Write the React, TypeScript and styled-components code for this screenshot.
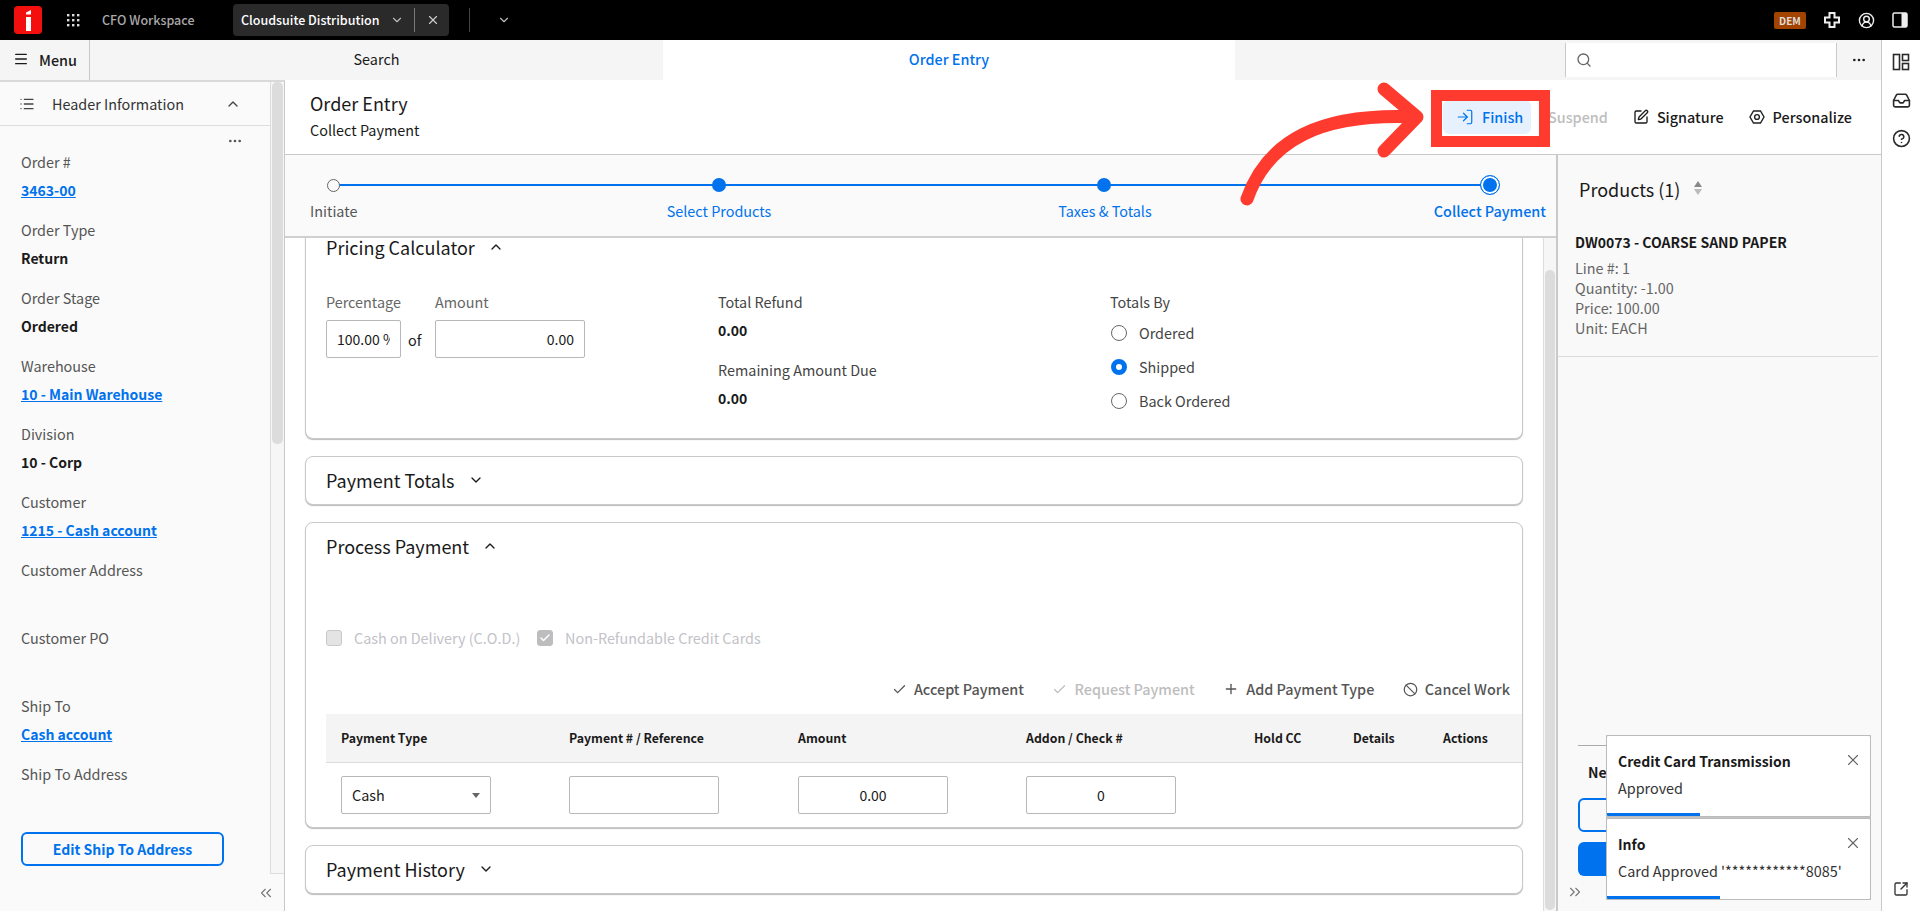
import React from "react";
import styled, { createGlobalStyle } from "styled-components";
import {
  Ban, Check, ChevronDown, ChevronUp, ChevronsLeft, ChevronsRight, CircleHelp, CircleUserRound,
  Ellipsis, Inbox, List, LogIn, Menu as MenuIcon, Plus, Search, SquareArrowOutUpRight, SquarePen, X,
} from "lucide-react";

const FONT = `"Noto Sans CJK SC", "Noto Sans", sans-serif`;
const BLUE = "#0072ed";

const Global = createGlobalStyle`
  html, body { margin: 0; padding: 0; height: 100%; overflow: hidden; }
  body { font-family: ${FONT}; font-size: 14.4px; color: #1a1a1a; background: #fff; }
  * { box-sizing: border-box; }
`;

const Page = styled.div`position: relative; width: 1920px; height: 911px; overflow: hidden; display: flex; flex-direction: column;`;

/* top bar */
const TopBar = styled.header`height: 40px; background: #000; display: flex; align-items: center; color: #fff; flex: none;`;
const Logo = styled.svg`width: 28px; height: 28px; margin-left: 14px; flex: none;`;
const WaffleWrap = styled.svg`width: 14px; height: 14px; margin-left: 24px; flex: none;`;
const Workspace = styled.span`margin-left: 22px; width: 131px; font-size: 12.5px; line-height: 20px; font-weight: 500; color: #a9a9a9;`;
const AppTab = styled.div`width: 216px; height: 32px; background: #2a2a2b; border-radius: 4px; display: flex; align-items: center; padding-left: 8px; color: #fff;`;
const AppTabName = styled.span`font-size: 12.5px; line-height: 20px; font-weight: 500; width: 149px; white-space: nowrap;`;
const AppTabSep = styled.span`width: 1px; height: 24px; background: #77777a; margin: 0 11px 0 10px;`;
const BarSep = styled.span`width: 1px; height: 24px; background: #444; margin-left: 20px;`;
const BarChevron = styled.span`display: flex; margin-left: 27px; color: #bbb;`;
const BarRight = styled.div`margin-left: auto; display: flex; align-items: center; padding-right: 10px;`;
const Dem = styled.span`width: 32px; height: 17px; background: #a24300; color: #ddd; border-radius: 2px; font-size: 10px; line-height: 17px; font-weight: 700; text-align: center; margin-right: 16px;`;
const BarIcon = styled.span`display: flex; width: 20px; justify-content: center; margin-right: 14px; &:last-child { margin-right: 0; }`;

/* body shell */
const Shell = styled.div`flex: 1; display: flex; min-height: 0;`;
const Work = styled.div`flex: 1; display: flex; flex-direction: column; min-width: 0;`;
const Rail = styled.aside`width: 39px; border-left: 1px solid #c9c9cc; padding-top: 12px; display: flex; flex-direction: column; align-items: center; background: #fff; position: relative;`;
const RailBtn = styled.span`display: flex; height: 20px; margin-bottom: 18.5px; color: #2a2a2a;`;
const RailBottom = styled.span`position: absolute; bottom: 14px; left: 11px; display: flex; color: #333;`;

/* nav row */
const NavRow = styled.nav`height: 40px; flex: none; display: flex; background: #f5f5f5;`;
const MenuBtn = styled.div`width: 90px; display: flex; align-items: center; padding: 0 0 2px 13px; gap: 10px; font-size: 14.4px; font-weight: 500; border-right: 1px solid #c9c9cc;`;
const NavTab = styled.div<{ $active?: boolean }>`width: ${p => p.$active ? 572 : 573}px; padding-bottom: 2px; display: flex; align-items: center; justify-content: center; font-size: 14.4px; line-height: 20px; ${p => p.$active ? `background:#fff;color:${BLUE};font-weight:500;` : ""}`;
const NavSpacer = styled.div`width: 330px;`;
const NavSearch = styled.div`width: 272px; margin: 3px 0; background: #fff; border-left: 1px solid #c9c9cc; border-right: 1px solid #c9c9cc; display: flex; align-items: center; padding-left: 10px; color: #666;`;
const NavMore = styled.div`flex: 1; display: flex; align-items: center; justify-content: center; color: #222;`;

/* main area */
const Body = styled.div`flex: 1; display: flex; min-height: 0;`;
const Sidebar = styled.aside`width: 285px; flex: none; background: #fafafa; border-right: 1px solid #c9c9cc; border-top: 2px solid #d9d9d9; display: flex; flex-direction: column; position: relative;`;
const SideScroll = styled.div`height: 792px; display: flex; flex: none;`;
const SideContent = styled.div`width: 270px; overflow: hidden;`;
const SideHead = styled.div`height: 44px; display: flex; align-items: center; padding-left: 19px; border-bottom: 1px solid #dcdcdc; color: #444;`;
const SideTitle = styled.span`margin-left: 17px; width: 173px; font-size: 14.4px; line-height: 20px; color: #333;`;
const SideMore = styled.div`height: 26px; padding: 7px 0 0 227px; color: #555; display: flex;`;
const FieldList = styled.dl`margin: 0; padding: 0 21px;`;
const FieldLabel = styled.dt`font-size: 14.4px; line-height: 20px; color: #555; height: 20px; white-space: nowrap;`;
const FieldValue = styled.dd<{ $link?: boolean }>`margin: 8px 0 0; height: 40px; font-size: 14px; line-height: 20px; font-weight: 600; white-space: nowrap; color: ${p => p.$link ? BLUE : "#1a1a1a"}; text-decoration: ${p => p.$link ? "underline" : "none"};`;
const EditBtn = styled.button`display: block; width: 203px; height: 34px; background: transparent; border: 2px solid ${BLUE}; border-radius: 6px; color: ${BLUE}; font: 600 14px/20px ${FONT}; padding: 0;`;
const Track = styled.div`width: 14px; flex: none; border-left: 1px solid #dcdcdc; border-bottom: 1px solid #dcdcdc; padding: 0 1px; background: #f6f6f6;`;
const Thumb = styled.div<{ $h: number; $top?: number }>`height: ${p => p.$h}px; margin-top: ${p => p.$top ?? 0}px; background: #dcdcdc; border-radius: 5px;`;
const SideFoot = styled.div`flex: 1; display: flex; justify-content: flex-end; align-items: center; padding-right: 9px; color: #777;`;

const Main = styled.main`flex: 1; display: flex; flex-direction: column; min-width: 0;`;
const PageHead = styled.div`height: 75px; flex: none; border-bottom: 1px solid #c9c9cc; background: #fff; display: flex; padding: 10px 29px 0 25px; position: relative;`;
const Titles = styled.div`flex: 1;`;
const H1 = styled.div`font-size: 18px; line-height: 26px; color: #1a1a1a;`;
const H2 = styled.div`font-size: 14.4px; line-height: 20px; margin-top: 4px; color: #1a1a1a;`;
const Actions = styled.div`display: flex; align-items: center; height: 34px; margin-top: 10px;`;
const ActBtn = styled.div<{ $kind?: "primary" | "off" }>`display: flex; align-items: center; gap: 8px; height: 34px; font-size: 14.4px; line-height: 20px; font-weight: 500; border-radius: 6px; white-space: nowrap; color: #1a1a1a;
  ${p => p.$kind === "primary" ? `background:#e6f1fd;color:${BLUE};padding:0 0 0 13px;width:88px;margin-right:17px;` : ""}
  ${p => p.$kind === "off" ? `color:#bdbdbd;margin-right:25px;` : ""}`;
const Sig = styled(ActBtn)`margin-right: 25px;`;

const Split = styled.div`flex: 1; display: flex; min-height: 0;`;
const Center = styled.div`width: 1273px; flex: none; display: flex; flex-direction: column; border-right: 2px solid #c9c9cc;`;
const Stepper = styled.div`height: 83px; flex: none; background: #fafafa; border-bottom: 2px solid #d0d0d0; position: relative;`;
const StepLine = styled.div`position: absolute; left: 48px; right: 67px; top: 29px; height: 2px; background: ${BLUE};`;
const Dots = styled.div`position: absolute; left: 38px; width: 1177px; top: 20px; height: 20px; display: grid; grid-template-columns: repeat(4, 20px); justify-content: space-between; justify-items: center; align-items: center;`;
const Dot = styled.span<{ $kind: "open" | "done" | "now" }>`width: ${p => p.$kind === "now" ? 20 : p.$kind === "done" ? 14 : 13}px; height: ${p => p.$kind === "now" ? 20 : p.$kind === "done" ? 14 : 13}px; border-radius: 50%;
  ${p => p.$kind === "open" ? "background:#fafafa;border:1px solid #666;" : ""}
  ${p => p.$kind === "done" ? `background:${BLUE};` : ""}
  ${p => p.$kind === "now" ? `background:${BLUE};border:1px solid ${BLUE};box-shadow:inset 0 0 0 2px #fff;` : ""}`;
const StepLabels = styled.div`position: absolute; left: 25px; right: 10px; top: 46px; display: grid; grid-template-columns: 190px 438px 334px 1fr; font-size: 14.4px; line-height: 20px;`;
const StepLabel = styled.span<{ $done?: boolean; $at: "l" | "c" | "r" }>`color: ${p => p.$done ? BLUE : "#555"}; text-align: ${p => p.$at === "l" ? "left" : p.$at === "c" ? "center" : "right"}; font-weight: ${p => p.$at === "r" ? 500 : 400}; white-space: nowrap;`;

const ScrollArea = styled.div`flex: 1; display: flex; min-height: 0; overflow: hidden; background: #fff;`;
const Cards = styled.div`flex: 1; padding: 0 20px; min-width: 0; overflow: hidden; display: flex; flex-direction: column;`;
const CardStack = styled.div`display: flex; flex-direction: column; gap: 17px; margin-top: -20px;`;
const MainTrack = styled(Track)`width: 13px; border-bottom: 0; background: #f6f6f6;`;
const Card = styled.section<{ $h: number }>`height: ${p => p.$h}px; flex: none; background: #fff; border: 1px solid #c9c9cc; box-shadow: 0 1px 1px #bbb; border-radius: 8px; padding: 0 20px; position: relative;`;
const CardHead = styled.div<{ $top: number }>`display: flex; align-items: center; gap: 13px; font-size: 18px; line-height: 20px; color: #1a1a1a; padding-top: ${p => p.$top}px;`;
const Head = styled.span`display: inline-block;`;

const Calc = styled.div`display: flex; margin-top: 35px;`;
const CalcLeft = styled.div`width: 392px; display: grid; grid-template-columns: 75px 34px 150px; grid-template-rows: 20px 38px; row-gap: 8px; align-items: center;`;
const Muted = styled.span`font-size: 14.4px; line-height: 20px; color: #666;`;
const Of = styled.span`text-align: left; padding-left: 7px; font-size: 14.4px;`;
const Box = styled.div<{ $w?: number; $align?: string }>`height: 38px; width: ${p => p.$w ? p.$w + "px" : "100%"}; background: #fff; border: 1px solid #b8b8bc; border-radius: 2px; font-size: 14px; line-height: 36px; padding: 0 10px; text-align: ${p => p.$align ?? "left"}; white-space: nowrap; position: relative;`;
const Clip = styled.span`display: block; overflow: hidden;`;
const CalcMid = styled.div`width: 392px;`;
const MidLabel = styled.div`font-size: 14.4px; line-height: 20px; color: #444;`;
const MidVal = styled.div`font-size: 14px; line-height: 20px; font-weight: 600; margin: 8px 0 20px;`;
const Radios = styled.div`display: flex; flex-direction: column; margin-top: 11px; gap: 14px;`;
const RadioRow = styled.div`display: flex; align-items: center; gap: 12px; padding-left: 1px; font-size: 14.4px; line-height: 20px; color: #444;`;
const Radio = styled.span<{ $on?: boolean }>`width: 16px; height: 16px; border-radius: 50%; border: ${p => p.$on ? `5px solid ${BLUE}` : "1px solid #666"}; background: #fff;`;

const Checks = styled.div`display: flex; margin-top: 70px; height: 24px; align-items: center;`;
const CheckItem = styled.div<{ $w: number }>`width: ${p => p.$w}px; display: flex; align-items: center; gap: 12px; color: #c2c2c8; font-size: 14.4px; line-height: 20px;`;
const CheckBox = styled.span<{ $on?: boolean }>`width: 16px; height: 16px; background: ${p => p.$on ? "#bdbdc0" : "#e4e4e4"}; border: 1px solid ${p => p.$on ? "#bdbdc0" : "#c8c8c8"}; border-radius: 3px; display: flex; align-items: center; justify-content: center; color: #fff;`;
const Toolbar = styled.div`display: flex; justify-content: flex-end; gap: 28.5px; margin: 27px -8px 0 0; height: 24px; align-items: center;`;
const Tool = styled.span<{ $off?: boolean }>`display: flex; align-items: center; gap: 7px; font-size: 14.4px; line-height: 20px; font-weight: 500; white-space: nowrap; color: ${p => p.$off ? "#bdbdbd" : "#555"};`;
const Table = styled.div`margin: 13px -20px 0 0;`;
const Row = styled.div<{ $head?: boolean }>`display: grid; grid-template-columns: 228px 229px 228px 228px 99px 90px 1fr; padding-left: 15px; align-items: center; ${p => p.$head ? "height:49px;background:#f4f4f4;border-bottom:1px solid #dcdcdc;font-size:12.3px;line-height:20px;font-weight:600;color:#1a1a1a;" : "height:64px;"}`;
const Select = styled(Box)`display: flex; align-items: center; justify-content: space-between; line-height: 20px; font-size: 14.4px;`;
const Caret = styled.span`width: 0; height: 0; border-left: 4px solid transparent; border-right: 4px solid transparent; border-top: 5px solid #666;`;

/* products */
const Products = styled.aside`flex: 1; background: #f9f9f9; position: relative; display: flex; flex-direction: column; overflow: hidden;`;
const ProdHead = styled.div`height: 76px; padding: 21px 0 0 21px; display: flex; align-items: flex-start; gap: 14px;`;
const ProdTitle = styled.span`font-size: 18px; line-height: 26px; color: #1a1a1a;`;
const Sort = styled.span`display: flex; flex-direction: column; gap: 2px; margin-top: 5px;`;
const SortUp = styled.i`width: 0; height: 0; border-left: 4px solid transparent; border-right: 4px solid transparent; border-bottom: 6px solid #888;`;
const SortDown = styled.i`width: 0; height: 0; border-left: 4px solid transparent; border-right: 4px solid transparent; border-top: 6px solid #bbb;`;
const ProdItem = styled.div`height: 126px; margin-right: 3px; padding: 0 0 0 17px; border-bottom: 1px solid #dcdcdc; font-size: 14.4px; line-height: 20px; color: #666;`;
const ProdName = styled.div`font-size: 14px; font-weight: 600; color: #1a1a1a; margin-bottom: 5px; line-height: 22px;`;
const ProdBottom = styled.div`flex: 1; display: flex; flex-direction: column; padding: 0 20px 0 20px; justify-content: flex-end;`;
const Rule = styled.div`height: 1px; background: #aaa; margin-bottom: 16px;`;
const NewLabel = styled.div`font-size: 14px; line-height: 20px; font-weight: 600; margin: 0 0 16px 10px; color: #1a1a1a;`;
const OutlineBtn = styled.div`height: 34px; border: 2px solid ${BLUE}; border-radius: 6px; margin-bottom: 10px;`;
const SolidBtn = styled.div`height: 34px; background: ${BLUE}; border-radius: 6px; margin-bottom: 7px;`;
const Expand = styled.div`height: 18px; margin: 0 0 10px -12px; display: flex; align-items: center; color: #777;`;

/* overlays */
const Toasts = styled.div`position: absolute; left: 1606px; top: 735px; width: 265px; display: flex; flex-direction: column; gap: 1px; background: #c4c4c4;`;
const Toast = styled.div`height: 82px; background: #fff; border: 1px solid #bbb; border-radius: 2px; padding: 14px 0 0 11px; position: relative; overflow: hidden;`;
const ToastTitle = styled.div`font-size: 14px; line-height: 22px; font-weight: 600; color: #1a1a1a;`;
const ToastMsg = styled.div`font-size: 14.4px; line-height: 20px; margin-top: 6px; color: #333;`;
const ToastClose = styled.span`position: absolute; right: 8px; top: 15px; display: flex; color: #666;`;
const ToastBar = styled.div<{ $w: number }>`position: absolute; left: 0; bottom: 0; height: 3px; width: ${p => p.$w}px; background: ${BLUE};`;
const RedBox = styled.div`position: absolute; left: 1431px; top: 90px; width: 119px; height: 57px; border: 11px solid #ff3b2f;`;
const Arrow = styled.svg`position: absolute; left: 1230px; top: 70px; width: 210px; height: 150px; pointer-events: none;`;

const fields: [string, string, boolean?][] = [
  ["Order #", "3463-00", true], ["Order Type", "Return"], ["Order Stage", "Ordered"],
  ["Warehouse", "10 - Main Warehouse", true], ["Division", "10 - Corp"], ["Customer", "1215 - Cash account", true],
  ["Customer Address", ""], ["Customer PO", ""], ["Ship To", "Cash account", true], ["Ship To Address", ""],
];

const Waffle = () => (
  <WaffleWrap viewBox="0 0 14 14" fill="#ddd">
    {[1, 6, 11].flatMap(y => [1, 6, 11].map(x => <rect key={`${x}${y}`} x={x} y={y} width="2.4" height="2.4" />))}
  </WaffleWrap>
);

export default function App() {
  return (
    <Page>
      <Global />
      <TopBar>
        <Logo viewBox="0 0 28 28">
          <rect width="28" height="28" rx="4" fill="#f40f0f" />
          <path d="M12 6.5 L17 4 V8.6 H12z M12 11 H17 V25 H12z" fill="#fff" />
        </Logo>
        <Waffle />
        <Workspace>CFO Workspace</Workspace>
        <AppTab>
          <AppTabName>Cloudsuite Distribution</AppTabName>
          <ChevronDown size={14} color="#bbb" />
          <AppTabSep />
          <X size={14} color="#ccc" />
        </AppTab>
        <BarSep />
        <BarChevron><ChevronDown size={14} /></BarChevron>
        <BarRight>
          <Dem>DEM</Dem>
          <BarIcon>
            <svg width="16" height="16" viewBox="0 0 16 16" fill="none" stroke="#eee" strokeWidth="2"><path d="M5.5 1h5v4.5H15v5h-4.5V15h-5v-4.5H1v-5h4.5z" /></svg>
          </BarIcon>
          <BarIcon><CircleUserRound size={17} color="#eee" /></BarIcon>
          <BarIcon>
            <svg width="16" height="16" viewBox="0 0 16 16"><rect x="1" y="1" width="14" height="14" rx="1.5" fill="#000" stroke="#eee" strokeWidth="1.5" /><rect x="9.5" y="1" width="5.5" height="14" fill="#eee" /></svg>
          </BarIcon>
        </BarRight>
      </TopBar>
      <Shell>
        <Work>
          <NavRow>
            <MenuBtn><MenuIcon size={16} />Menu</MenuBtn>
            <NavTab>Search</NavTab>
            <NavTab $active>Order Entry</NavTab>
            <NavSpacer />
            <NavSearch><Search size={16} /></NavSearch>
            <NavMore><Ellipsis size={16} /></NavMore>
          </NavRow>
          <Body>
            <Sidebar>
              <SideScroll>
                <SideContent>
                  <SideHead>
                    <List size={16} />
                    <SideTitle>Header Information</SideTitle>
                    <ChevronUp size={16} />
                  </SideHead>
                  <SideMore><Ellipsis size={16} /></SideMore>
                  <FieldList>
                    {fields.map(([l, v, link]) => (
                      <React.Fragment key={l}>
                        <FieldLabel>{l}</FieldLabel>
                        <FieldValue $link={link}>{v}</FieldValue>
                      </React.Fragment>
                    ))}
                  </FieldList>
                  <FieldList><EditBtn>Edit Ship To Address</EditBtn></FieldList>
                </SideContent>
                <Track><Thumb $h={362} /></Track>
              </SideScroll>
              <SideFoot><ChevronsLeft size={18} strokeWidth={1.5} /></SideFoot>
            </Sidebar>
            <Main>
              <PageHead>
                <Titles>
                  <H1>Order Entry</H1>
                  <H2>Collect Payment</H2>
                </Titles>
                <Actions>
                  <ActBtn $kind="primary"><LogIn size={18} strokeWidth={1.6} />Finish</ActBtn>
                  <ActBtn $kind="off">Suspend</ActBtn>
                  <Sig><SquarePen size={16} />Signature</Sig>
                  <ActBtn>
                    <svg width="16" height="16" viewBox="0 0 16 16" fill="none" stroke="#222" strokeWidth="1.4"><path d="M4.5 2h7L15 8l-3.5 6h-7L1 8z" /><circle cx="8" cy="8" r="2.4" /></svg>
                    Personalize
                  </ActBtn>
                </Actions>
              </PageHead>
              <Split>
                <Center>
                  <Stepper>
                    <StepLine />
                    <Dots>
                      <Dot $kind="open" /><Dot $kind="done" /><Dot $kind="done" /><Dot $kind="now" />
                    </Dots>
                    <StepLabels>
                      <StepLabel $at="l">Initiate</StepLabel>
                      <StepLabel $at="c" $done>Select Products</StepLabel>
                      <StepLabel $at="c" $done>Taxes &amp; Totals</StepLabel>
                      <StepLabel $at="r" $done>Collect Payment</StepLabel>
                    </StepLabels>
                  </Stepper>
                  <ScrollArea>
                    <Cards>
                      <CardStack>
                        <Card $h={221}>
                          <CardHead $top={18}><Head>Pricing Calculator</Head><ChevronUp size={16} /></CardHead>
                          <Calc>
                            <CalcLeft>
                              <Muted>Percentage</Muted><span /><Muted>Amount</Muted>
                              <Box><Clip>100.00 %</Clip></Box><Of>of</Of><Box $align="right">0.00</Box>
                            </CalcLeft>
                            <CalcMid>
                              <MidLabel>Total Refund</MidLabel>
                              <MidVal>0.00</MidVal>
                              <MidLabel>Remaining Amount Due</MidLabel>
                              <MidVal>0.00</MidVal>
                            </CalcMid>
                            <div>
                              <MidLabel>Totals By</MidLabel>
                              <Radios>
                                <RadioRow><Radio />Ordered</RadioRow>
                                <RadioRow><Radio $on />Shipped</RadioRow>
                                <RadioRow><Radio />Back Ordered</RadioRow>
                              </Radios>
                            </div>
                          </Calc>
                        </Card>
                        <Card $h={49}>
                          <CardHead $top={13}><Head>Payment Totals</Head><ChevronDown size={16} /></CardHead>
                        </Card>
                        <Card $h={306}>
                          <CardHead $top={13}><Head>Process Payment</Head><ChevronUp size={16} /></CardHead>
                          <Checks>
                            <CheckItem $w={211}><CheckBox />Cash on Delivery (C.O.D.)</CheckItem>
                            <CheckItem $w={300}><CheckBox $on><Check size={12} strokeWidth={3} /></CheckBox>Non-Refundable Credit Cards</CheckItem>
                          </Checks>
                          <Toolbar>
                            <Tool><Check size={15} />Accept Payment</Tool>
                            <Tool $off><Check size={15} />Request Payment</Tool>
                            <Tool><Plus size={16} />Add Payment Type</Tool>
                            <Tool><Ban size={15} />Cancel Work</Tool>
                          </Toolbar>
                          <Table>
                            <Row $head>
                              <span>Payment Type</span><span>Payment # / Reference</span><span>Amount</span><span>Addon / Check #</span><span>Hold CC</span><span>Details</span><span>Actions</span>
                            </Row>
                            <Row>
                              <Select $w={150}>Cash<Caret /></Select>
                              <Box $w={150} />
                              <Box $w={150} $align="center">0.00</Box>
                              <Box $w={150} $align="center">0</Box>
                            </Row>
                          </Table>
                        </Card>
                        <Card $h={49}>
                          <CardHead $top={13}><Head>Payment History</Head><ChevronDown size={16} /></CardHead>
                        </Card>
                      </CardStack>
                    </Cards>
                    <MainTrack><Thumb $h={640} $top={32} /></MainTrack>
                  </ScrollArea>
                </Center>
                <Products>
                  <ProdHead><ProdTitle>Products (1)</ProdTitle><Sort><SortUp /><SortDown /></Sort></ProdHead>
                  <ProdItem>
                    <ProdName>DW0073 - COARSE SAND PAPER</ProdName>
                    <div>Line #: 1</div><div>Quantity: -1.00</div><div>Price: 100.00</div><div>Unit: EACH</div>
                  </ProdItem>
                  <ProdBottom>
                    <Rule />
                    <NewLabel>New</NewLabel>
                    <OutlineBtn />
                    <SolidBtn />
                    <Expand><ChevronsRight size={18} strokeWidth={1.5} /></Expand>
                  </ProdBottom>
                </Products>
              </Split>
            </Main>
          </Body>
        </Work>
        <Rail>
          <RailBtn>
            <svg width="20" height="20" viewBox="0 0 20 20" fill="none" stroke="#2a2a2a" strokeWidth="1.6"><rect x="2.5" y="2.5" width="6" height="15" /><rect x="11.5" y="2.5" width="6" height="6" /><rect x="11.5" y="11.5" width="6" height="6" /></svg>
          </RailBtn>
          <RailBtn><Inbox size={19} /></RailBtn>
          <RailBtn><CircleHelp size={19} /></RailBtn>
          <RailBottom><SquareArrowOutUpRight size={16} /></RailBottom>
        </Rail>
      </Shell>
      <Toasts>
        <Toast>
          <ToastTitle>Credit Card Transmission</ToastTitle>
          <ToastMsg>Approved</ToastMsg>
          <ToastClose><X size={18} strokeWidth={1.5} /></ToastClose>
          <ToastBar $w={93} />
        </Toast>
        <Toast>
          <ToastTitle>Info</ToastTitle>
          <ToastMsg>Card Approved '************8085'</ToastMsg>
          <ToastClose><X size={18} strokeWidth={1.5} /></ToastClose>
          <ToastBar $w={113} />
        </Toast>
      </Toasts>
      <RedBox />
      <Arrow viewBox="1230 70 210 150" fill="none" stroke="#ff3b2f" strokeWidth="13" strokeLinecap="round" strokeLinejoin="round">
        <path d="M1247 199 C1268 140 1320 113 1415 117" />
        <path d="M1384 89 L1417 117 L1384 151" />
      </Arrow>
    </Page>
  );
}
